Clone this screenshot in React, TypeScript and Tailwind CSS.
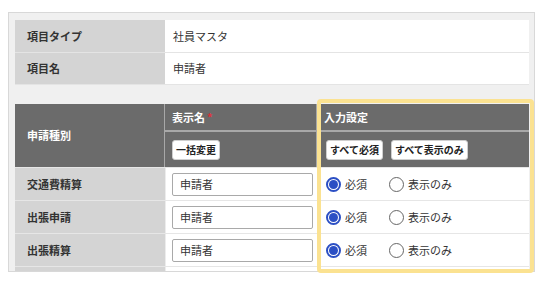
import React from "react";

const font = { fontFamily: '"Noto Sans CJK JP", "Noto Sans", sans-serif' };

function Radio({ checked, label }: { checked: boolean; label: string }) {
  return (
    <label className="flex items-center gap-[4px] text-[11px] text-[#333]">
      {checked ? (
        <span className="flex h-[15px] w-[15px] items-center justify-center rounded-full border-[2px] border-[#2b4fc4] bg-white">
          <span className="h-[9px] w-[9px] rounded-full bg-[#2b4fc4]" />
        </span>
      ) : (
        <span className="h-[15px] w-[15px] rounded-full border-[1.5px] border-[#666] bg-white" />
      )}
      <span>{label}</span>
    </label>
  );
}

function Btn({ children }: { children: React.ReactNode }) {
  return (
    <button className="h-[20px] rounded-[3px] border border-[#cfcfcf] bg-white px-[3px] text-[10px] font-bold leading-none text-[#222]">
      {children}
    </button>
  );
}

function DataRow({ name, empty }: { name: string; empty?: boolean }) {
  return (
    <div className="flex h-[33px] border-b border-[#e6e6e6]">
      <div className="flex w-[150px] items-center bg-[#d4d4d4] pl-[12px] text-[11px] font-bold text-[#333]">
        {name}
      </div>
      <div className="w-[1px] bg-[#ececec]" />
      <div className="flex w-[152px] items-center bg-white pl-[6px]">
        {!empty && (
          <div className="flex h-[23px] w-[141px] items-center rounded-[2px] border border-[#a9a9a9] bg-white pl-[7px] text-[11px] text-[#333]">
            申請者
          </div>
        )}
      </div>
      <div className="flex flex-1 items-center gap-[22px] bg-white pl-[8px]">
        {!empty && (
          <>
            <Radio checked label="必須" />
            <Radio checked={false} label="表示のみ" />
          </>
        )}
      </div>
    </div>
  );
}

export default function App() {
  return (
    <div className="relative h-[286px] w-[546px] bg-white" style={font}>
      <div className="absolute left-[8px] top-[12px] h-[260px] w-[527px] overflow-hidden border border-[#d8d8d8] bg-[#f0f0f0] px-[6px] pt-[7px]">
        <div className="w-[514px]">
          <div className="flex h-[33px] border-b border-[#e4e4e4]">
            <div className="flex w-[150px] items-center bg-[#d4d4d4] pl-[12px] text-[11px] font-bold text-[#333]">
              項目タイプ
            </div>
            <div className="flex flex-1 items-center bg-white pl-[8px] text-[11px] text-[#333]">
              社員マスタ
            </div>
          </div>
          <div className="flex h-[32px] border-b border-[#e4e4e4]">
            <div className="flex w-[150px] items-center bg-[#d4d4d4] pl-[12px] text-[11px] font-bold text-[#333]">
              項目名
            </div>
            <div className="flex flex-1 items-center bg-white pl-[8px] text-[11px] text-[#333]">
              申請者
            </div>
          </div>
        </div>

        <div className="mt-[19px] w-[514px]">
          <div className="flex h-[63px] bg-[#6b6b6b]">
            <div className="flex w-[150px] items-center border-r border-[#a8a8a8] pl-[12px] text-[11px] font-bold text-white">
              申請種別
            </div>
            <div className="flex flex-1 flex-col">
              <div className="flex h-[28px] border-b-[2px] border-[#a8a8a8]">
                <div className="flex w-[152px] items-center border-r border-[#a8a8a8] pl-[7px] text-[11px] font-bold text-white">
                  表示名<span className="ml-[2px] text-[#e0303a]">*</span>
                </div>
                <div className="flex flex-1 items-center pl-[7px] text-[11px] font-bold text-white">
                  入力設定
                </div>
              </div>
              <div className="flex flex-1">
                <div className="flex w-[152px] items-center border-r border-[#a8a8a8] pl-[7px]">
                  <Btn>一括変更</Btn>
                </div>
                <div className="flex flex-1 items-center gap-[8px] pl-[9px]">
                  <Btn>すべて必須</Btn>
                  <Btn>すべて表示のみ</Btn>
                </div>
              </div>
            </div>
          </div>
          <div className="h-[1px] bg-[#e6e6e6]" />
          <DataRow name="交通費精算" />
          <DataRow name="出張申請" />
          <DataRow name="出張精算" />
          <DataRow name="" empty />
        </div>
      </div>
      <div className="absolute left-[317px] top-[99px] h-[174px] w-[217px] rounded-[4px] border-[4px] border-[#fbe291]" />
    </div>
  );
}
